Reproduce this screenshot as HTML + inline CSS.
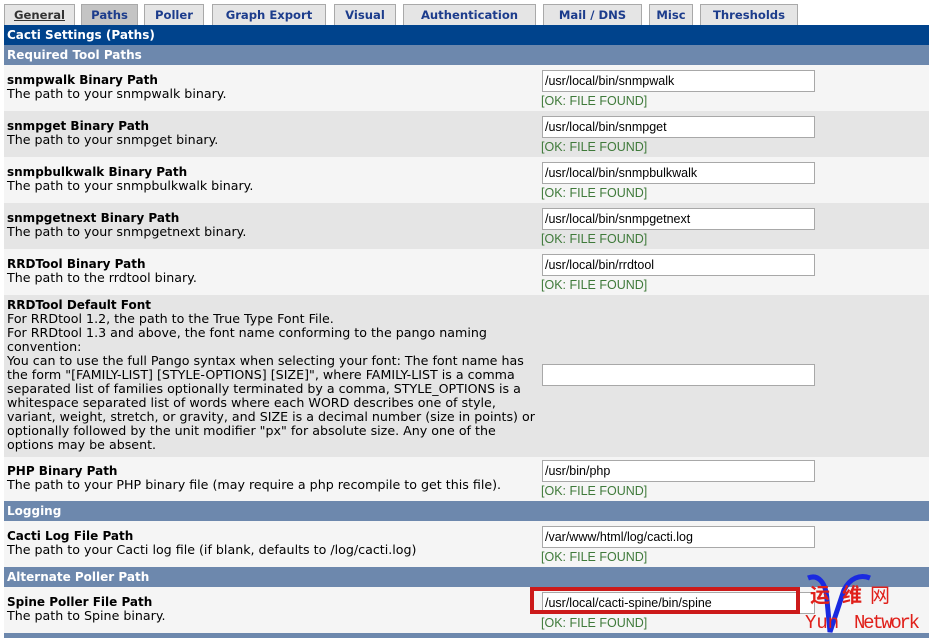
<!DOCTYPE html>
<html><head><meta charset="utf-8"><style>
*{margin:0;padding:0;box-sizing:border-box}
body{width:929px;height:638px;background:#fff;position:relative;overflow:hidden;font-family:"DejaVu Sans",Verdana,sans-serif;font-size:12.65px;color:#000}
.tab{position:absolute;top:4px;height:21px;background:#e5e5e5;border:1px solid #a9a9a9;border-bottom:none;font-weight:bold;color:#1c3c8c;font-size:11.6px;text-align:center;line-height:20px}
.tab.act{background:#c4c4c4}
.bar{position:absolute;left:4px;width:925px;color:#fff;font-weight:bold;padding-left:3px;font-size:12px}
.dark{background:#00438c;height:20px;line-height:20px}
.sub{background:#6d88ad;height:20px;line-height:20px}
.row{position:absolute;left:4px;width:925px;padding:8px 0 0 3px;line-height:14px;white-space:nowrap}
.a{background:#f5f5f5}.b{background:#e5e5e5}
.row b{font-size:12px}
.in{position:absolute;left:538px;width:273px;height:22px;background:#fff;border:1px solid #a8a8a8;font-family:"Liberation Sans",Arial,sans-serif;font-size:12.5px;line-height:20px;padding-left:2px}
.ok{position:absolute;left:537px;font-family:"Liberation Sans",Arial,sans-serif;font-size:12.5px;color:#3f7a3a}
</style></head><body>
<div class="tab" style="left:4px;width:71px;color:#333;text-decoration:underline">General</div>
<div class="tab act" style="left:81px;width:57px">Paths</div>
<div class="tab" style="left:144px;width:60px">Poller</div>
<div class="tab" style="left:212px;width:114px">Graph Export</div>
<div class="tab" style="left:334px;width:62px">Visual</div>
<div class="tab" style="left:403px;width:133px">Authentication</div>
<div class="tab" style="left:543px;width:99px">Mail / DNS</div>
<div class="tab" style="left:649px;width:44px">Misc</div>
<div class="tab" style="left:700px;width:98px">Thresholds</div>

<div class="bar dark" style="top:25px">Cacti Settings (Paths)</div>
<div class="bar sub" style="top:45px">Required Tool Paths</div>

<div class="row a" style="top:65px;height:46px"><b>snmpwalk Binary Path</b><br>The path to your snmpwalk binary.
<div class="in" style="top:5px">/usr/local/bin/snmpwalk</div><div class="ok" style="top:29px">[OK: FILE FOUND]</div></div>
<div class="row b" style="top:111px;height:46px"><b>snmpget Binary Path</b><br>The path to your snmpget binary.
<div class="in" style="top:5px">/usr/local/bin/snmpget</div><div class="ok" style="top:29px">[OK: FILE FOUND]</div></div>
<div class="row a" style="top:157px;height:46px"><b>snmpbulkwalk Binary Path</b><br>The path to your snmpbulkwalk binary.
<div class="in" style="top:5px">/usr/local/bin/snmpbulkwalk</div><div class="ok" style="top:29px">[OK: FILE FOUND]</div></div>
<div class="row b" style="top:203px;height:46px"><b>snmpgetnext Binary Path</b><br>The path to your snmpgetnext binary.
<div class="in" style="top:5px">/usr/local/bin/snmpgetnext</div><div class="ok" style="top:29px">[OK: FILE FOUND]</div></div>
<div class="row a" style="top:249px;height:46px"><b>RRDTool Binary Path</b><br>The path to the rrdtool binary.
<div class="in" style="top:5px">/usr/local/bin/rrdtool</div><div class="ok" style="top:29px">[OK: FILE FOUND]</div></div>
<div class="row b" style="top:295px;height:162px;padding-top:3px"><b>RRDTool Default Font</b><br>For RRDtool 1.2, the path to the True Type Font File.<br>For RRDtool 1.3 and above, the font name conforming to the pango naming<br>convention:<br>You can to use the full Pango syntax when selecting your font: The font name has<br>the form "[FAMILY-LIST] [STYLE-OPTIONS] [SIZE]", where FAMILY-LIST is a comma<br>separated list of families optionally terminated by a comma, STYLE_OPTIONS is a<br>whitespace separated list of words where each WORD describes one of style,<br>variant, weight, stretch, or gravity, and SIZE is a decimal number (size in points) or<br>optionally followed by the unit modifier "px" for absolute size. Any one of the<br>options may be absent.
<div class="in" style="top:69px"></div></div>
<div class="row a" style="top:457px;height:44px;padding-top:7px"><b>PHP Binary Path</b><br>The path to your PHP binary file (may require a php recompile to get this file).
<div class="in" style="top:3px">/usr/bin/php</div><div class="ok" style="top:27px">[OK: FILE FOUND]</div></div>
<div class="bar sub" style="top:501px">Logging</div>
<div class="row a" style="top:521px;height:46px"><b>Cacti Log File Path</b><br>The path to your Cacti log file (if blank, defaults to /log/cacti.log)
<div class="in" style="top:5px">/var/www/html/log/cacti.log</div><div class="ok" style="top:29px">[OK: FILE FOUND]</div></div>
<div class="bar sub" style="top:567px">Alternate Poller Path</div>
<div class="row a" style="top:587px;height:46px"><b>Spine Poller File Path</b><br>The path to Spine binary.
<div class="in" style="top:5px">/usr/local/cacti-spine/bin/spine</div><div class="ok" style="top:29px">[OK: FILE FOUND]</div></div>
<div class="bar sub" style="top:633px;height:5px"></div>
<div style="position:absolute;left:530px;top:587px;width:270px;height:27px;border:4px solid #cc1a1a"></div>
<svg style="position:absolute;left:800px;top:572px" width="129" height="66">
<path d="M8 6 C18 2 26 10 27 28 L30 60 L44 18 C50 6 60 2 70 6" fill="none" stroke="#1a2ae0" stroke-width="5"/>
<text x="10" y="30" fill="#e0201a" font-family="Noto Sans CJK SC,sans-serif" font-size="20" font-weight="bold">运</text>
<text x="42" y="30" fill="#e0201a" font-family="Noto Sans CJK SC,sans-serif" font-size="20" font-weight="bold">维</text>
<text x="70" y="30" fill="#e0201a" font-family="Noto Sans CJK SC,sans-serif" font-size="20">网</text>
<text x="5" y="56" fill="#e0201a" font-family="Liberation Mono,monospace" font-size="19">Yun</text>
<text x="54" y="56" fill="#e0201a" font-family="Liberation Mono,monospace" font-size="19" textLength="66">Network</text>
</svg>
</body></html>
